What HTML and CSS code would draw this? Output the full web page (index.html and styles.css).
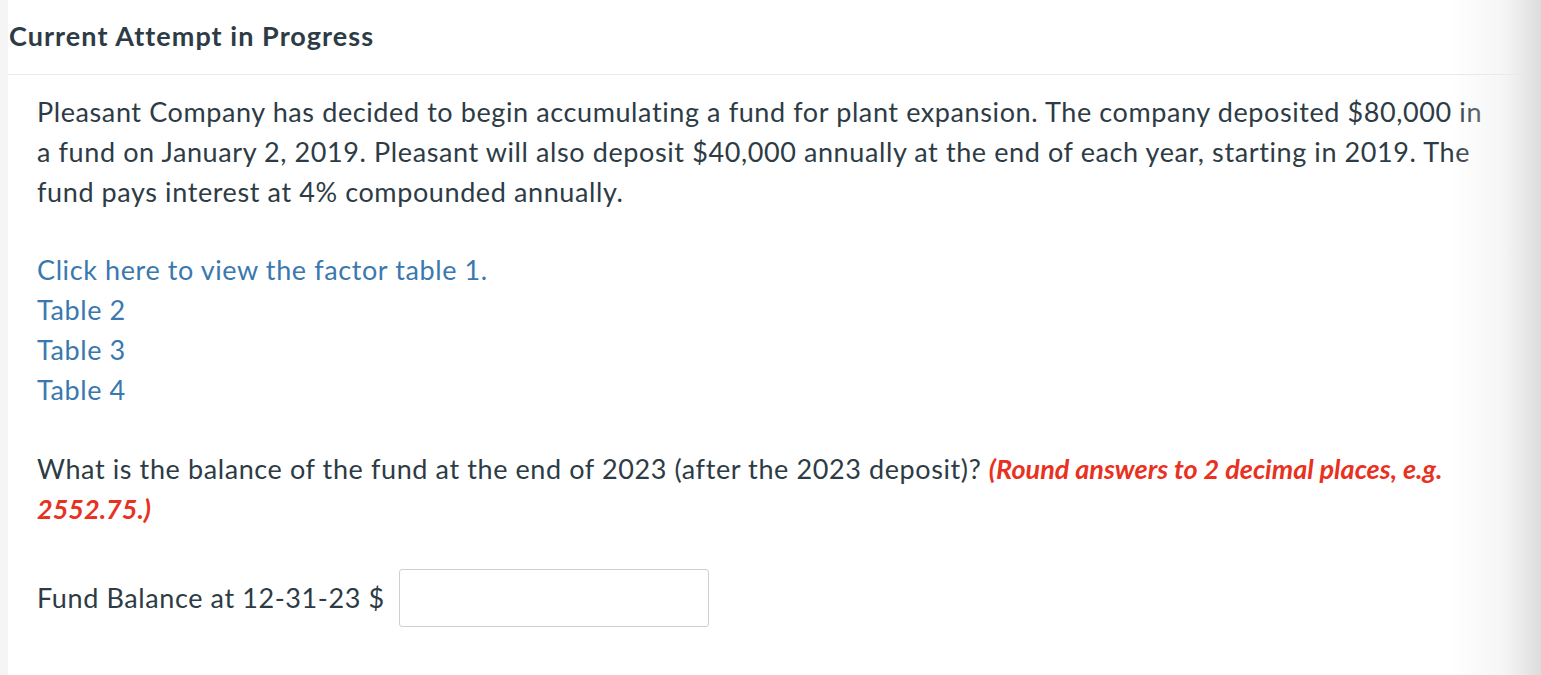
FILE: index.html
```html
<!DOCTYPE html>
<html>
<head>
<meta charset="utf-8">
<link rel="stylesheet" href="styles.css">
</head>
<body>
<div class="page">
  <div class="side"></div>
  <main class="main">
    <h1 class="title">Current Attempt in Progress</h1>
    <div class="content">
      <p class="intro">Pleasant Company has decided to begin accumulating a fund for plant expansion. The company deposited $80,000 in a fund on January 2, 2019. Pleasant will also deposit $40,000 annually at the end of each year, starting in 2019. The fund pays interest at 4% compounded annually.</p>
      <div class="links">
        <a class="link" href="#">Click here to view the factor table 1.</a>
        <a class="link" href="#">Table 2</a>
        <a class="link" href="#">Table 3</a>
        <a class="link" href="#">Table 4</a>
      </div>
      <p class="question">What is the balance of the fund at the end of 2023 (after the 2023 deposit)? <em class="hint">(Round answers to 2 decimal places, e.g. 2552.75.)</em></p>
      <div class="answer">
        <span class="label">Fund Balance at 12-31-23 $</span>
        <input class="field" type="text">
      </div>
    </div>
  </main>
  <div class="shade"></div>
</div>
</body>
</html>
```

FILE: styles.css
```css
html, body {
  margin: 0;
  padding: 0;
  background: #fff;
}
body {
  font-family: Lato, "Open Sans", sans-serif;
  color: #2d3b45;
  width: 1541px;
  height: 675px;
  overflow: hidden;
}
.page {
  display: flex;
  height: 675px;
  position: relative;
}
.side {
  width: 8px;
  flex: none;
  background: #f5f5f5;
}
.main {
  flex: 1;
  padding-right: 16px;
}
.title {
  margin: 0;
  font-size: 27px;
  font-weight: 700;
  line-height: 32px;
  padding: 20px 0 22px 1px;
  border-bottom: 1px solid #e9e9e9;
  letter-spacing: 1.05px;
}
.content {
  padding: 0 0 0 29px;
  max-width: 1458px;
  font-size: 27px;
  line-height: 40px;
  letter-spacing: 0.6px;
}
.intro {
  margin: 17px 0 0;
}
.links {
  display: flex;
  flex-direction: column;
  margin-top: 38px;
  align-items: flex-start;
}
.link {
  color: #3a78ae;
  text-decoration: none;
}
.question {
  margin: 39px 0 0;
}
.hint {
  color: #e8321f;
  font-weight: 700;
  font-style: italic;
  letter-spacing: 0;
}
.answer {
  display: flex;
  align-items: center;
  gap: 14px;
  margin-top: 40px;
}
.field {
  width: 310px;
  height: 58px;
  box-sizing: border-box;
  border: 1px solid #cfcfcf;
  border-radius: 3px;
  margin: 0;
  padding: 0;
}
.shade {
  position: absolute;
  right: 0;
  top: 0;
  bottom: 0;
  width: 90px;
  background: linear-gradient(to right, rgba(235,235,235,0) 0%, rgba(235,235,235,0.5) 60%, #e8e8e8 82%, #dcdcdc 100%);
  pointer-events: none;
}
```
